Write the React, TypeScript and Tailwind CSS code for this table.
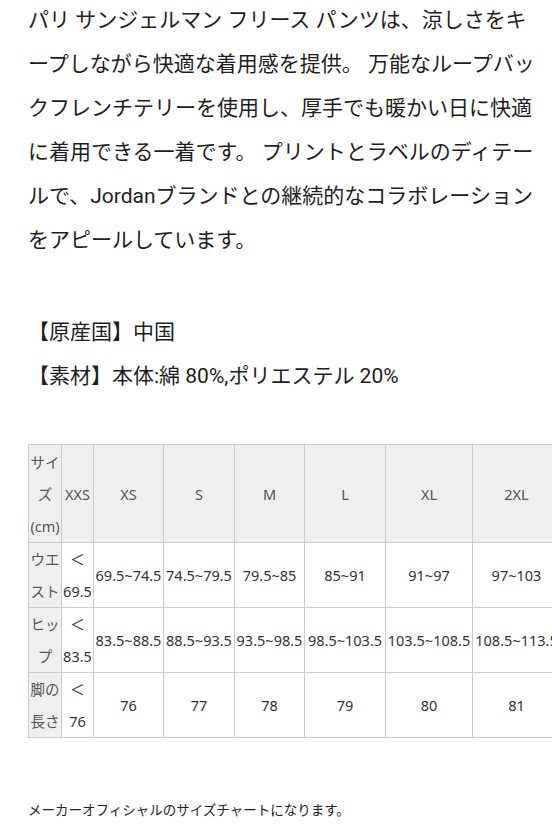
import React from "react";

const font = { fontFamily: '"Noto Sans", "Noto Sans CJK JP", sans-serif' };
const paraFont = { fontFamily: 'Roboto, "Noto Sans CJK JP", sans-serif' };

const headers = ["サイズ(cm)", "XXS", "XS", "S", "M", "L", "XL", "2XL"];
const widths = [33, 32, 70, 71, 70, 81, 87, 88];
const rows: string[][] = [
  ["ウエスト", "69.5", "69.5~74.5", "74.5~79.5", "79.5~85", "85~91", "91~97", "97~103"],
  ["ヒップ", "83.5", "83.5~88.5", "88.5~93.5", "93.5~98.5", "98.5~103.5", "103.5~108.5", "108.5~113.5"],
  ["脚の長さ", "76", "76", "77", "78", "79", "80", "81"],
];

export default function App() {
  return (
    <div
      className="w-[552px] h-[833px] overflow-hidden bg-white text-[#1e1e1e]"
      style={font}
    >
      <div className="pl-[28px] text-[21px] leading-[44px] -mt-[2px]" style={paraFont}>
        <p>
          パリ サンジェルマン フリース パンツは、涼しさをキ<br />
          ープしながら快適な着用感を提供。 万能なループバッ<br />
          クフレンチテリーを使用し、厚手でも暖かい日に快適<br />
          に着用できる一着です。 プリントとラベルのディテー<br />
          ルで、Jordanブランドとの継続的なコラボレーション<br />
          をアピールしています。
        </p>
        <p className="mt-[48px]">【原産国】中国</p>
        <p>【素材】本体:綿 80%,ポリエステル 20%</p>
      </div>

      <div className="pl-[28px] mt-[46px]">
        <table className="table-fixed border-collapse text-[14.5px] leading-[32px] w-[532px]">
          <colgroup>
            {widths.map((w, i) => (
              <col key={i} style={{ width: w }} />
            ))}
          </colgroup>
          <thead>
            <tr className="bg-[#efefef] text-[#555]">
              {headers.map((h, i) => (
                <th
                  key={i}
                  className="border border-[#cccccc] font-normal text-center p-0 align-middle h-[98px]"
                >
                  {i === 0 ? (
                    <>
                      サイ<br />ズ<br />(cm)
                    </>
                  ) : (
                    h
                  )}
                </th>
              ))}
            </tr>
          </thead>
          <tbody>
            {rows.map((r, ri) => (
              <tr key={ri} className="h-[65px]">
                {r.map((c, ci) => (
                  <td
                    key={ci}
                    className={
                      ci === 0
                        ? "border border-[#cccccc] bg-[#efefef] text-[#555] text-center p-0 align-middle"
                        : "border border-[#cccccc] text-[#333] text-center p-0 align-middle whitespace-nowrap"
                    }
                  >
                    {ci === 1 ? (
                      <>
                        ＜<br />
                        {c}
                      </>
                    ) : (
                      c
                    )}
                  </td>
                ))}
              </tr>
            ))}
          </tbody>
        </table>
      </div>

      <p className="pl-[28px] mt-[62px] text-[13.5px] leading-[20px] text-[#222]">
        メーカーオフィシャルのサイズチャートになります。
      </p>
    </div>
  );
}
